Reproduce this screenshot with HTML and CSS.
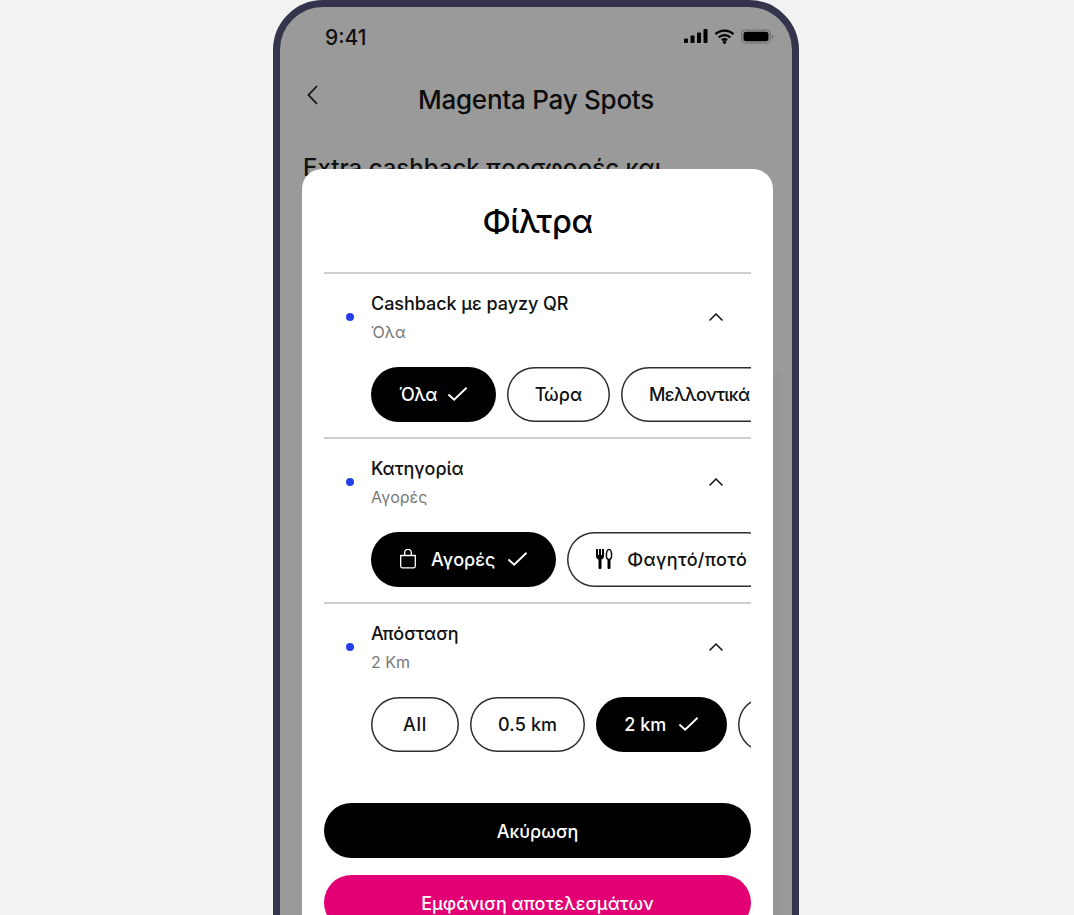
FILE: index.html
```html
<!DOCTYPE html>
<html lang="el">
<head>
<meta charset="utf-8">
<title>Magenta Pay Spots</title>
<link rel="stylesheet" href="styles.css">
</head>
<body>
<div class="phone">
  <div class="status">
    <span class="time">9:41</span>
    <div class="status-icons">
      <svg width="24" height="14" viewBox="0 0 24 14"><rect x="0" y="9.5" width="4" height="4.5" rx="1"/><rect x="6.5" y="6.500" width="4" height="7.5" rx="1"/><rect x="13" y="3.500" width="4" height="10.5" rx="1"/><rect x="19.5" y="0" width="4" height="14" rx="1"/></svg>
      <svg width="21" height="15" viewBox="0 0 21 15"><path class="wifi" d="M1.500 5.200C6.600.4 14.400.4 19.500 5.200M4.700 8.400c3.300-3 8.300-3 11.600 0M7.900 11.200c1.500-1.200 3.700-1.200 5.200 0"/><circle cx="10.500" cy="13.300" r="1.600"/></svg>
      <svg width="33" height="15" viewBox="0 0 33 15"><rect x=".7" y="1" width="28.600" height="13" rx="4" fill="none" stroke="#6f6f6f" stroke-width="1.200"/><rect x="2.500" y="2.800" width="25" height="9.400" rx="2.600"/><path d="M31 5.500c1 .3 1.500 1 1.500 2s-.5 1.700-1.500 2z" fill="#6f6f6f"/></svg>
    </div>
  </div>
  <div class="nav">
    <svg class="back" width="14" height="24" viewBox="0 0 14 24"><path d="M11 3 2.500 12 11 21"/></svg>
    <h1 class="nav-title">Magenta Pay Spots</h1>
  </div>
  <p class="lead">Extra cashback προσφορές και</p>
  <div class="shade"></div>

  <div class="sheet">
    <h2 class="sheet-title">Φίλτρα</h2>

    <section class="group">
      <div class="head">
        <span class="dot"></span>
        <div class="labels"><div class="label">Cashback με payzy QR</div><div class="value">Όλα</div></div>
        <svg class="chev" width="16" height="10" viewBox="0 0 16 10"><path d="M1.500 8.500 8 2l6.500 6.500"/></svg>
      </div>
      <div class="chips">
        <div class="chip on tight">Όλα<svg class="tick" width="21" height="16" viewBox="0 0 22 16"><path d="M1.500 8.500 7.500 14 20.500 1.500"/></svg></div>
        <div class="chip">Τώρα</div>
        <div class="chip tight">Μελλοντικά</div>
      </div>
    </section>

    <section class="group">
      <div class="head">
        <span class="dot"></span>
        <div class="labels"><div class="label">Κατηγορία</div><div class="value">Αγορές</div></div>
        <svg class="chev" width="16" height="10" viewBox="0 0 16 10"><path d="M1.500 8.500 8 2l6.500 6.500"/></svg>
      </div>
      <div class="chips">
        <div class="chip on"><svg class="lead-icon bag" width="18" height="20" viewBox="0 0 18 20"><path d="M1.700 6.500h14.600v10.800a1.500 1.500 0 0 1-1.500 1.500H3.200a1.500 1.500 0 0 1-1.500-1.500zM5.700 6.500V3.700a3.300 3.300 0 0 1 6.600 0v2.800"/></svg>Αγορές<svg class="tick" width="21" height="16" viewBox="0 0 22 16"><path d="M1.500 8.500 7.500 14 20.500 1.500"/></svg></div>
        <div class="chip loose"><svg class="lead-icon" width="18" height="22" viewBox="0 0 18 22"><path d="M1 1h2v6h1V1h2v6h1V1h2v7c0 2-1 3-2.500 3.500V20a1 1 0 0 1-1 1h-1a1 1 0 0 1-1-1v-8.500C2 11 1 10 1 8z"/><path class="knife" d="M14 1.500c-1.600 0-2.600 3-2.600 6 0 2.500.8 4 2.600 4s2.600-1.500 2.600-4c0-3-1-6-2.600-6z"/><rect x="12.500" y="11" width="3" height="10" rx="1"/></svg>Φαγητό/ποτό</div>
      </div>
    </section>

    <section class="group">
      <div class="head">
        <span class="dot"></span>
        <div class="labels"><div class="label">Απόσταση</div><div class="value">2 Km</div></div>
        <svg class="chev" width="16" height="10" viewBox="0 0 16 10"><path d="M1.500 8.500 8 2l6.500 6.500"/></svg>
      </div>
      <div class="chips">
        <div class="chip chip-all">All</div>
        <div class="chip mid">0.5 km</div>
        <div class="chip on">2 km<svg class="tick" width="21" height="16" viewBox="0 0 22 16"><path d="M1.500 8.500 7.500 14 20.500 1.500"/></svg></div>
        <div class="chip chip-blank"></div>
      </div>
    </section>

    <div class="actions">
      <div class="btn btn-dark">Ακύρωση</div>
      <div class="btn btn-pink">Εμφάνιση αποτελεσμάτων</div>
    </div>
  </div>
</div>
</body>
</html>
```
FILE: styles.css
```css
* { box-sizing: border-box; }
html, body { margin: 0; height: 915px; overflow: hidden; background: #f2f2f2; }
body { padding-right: 2px; font-family: "Inter", "Noto Sans", sans-serif; color: #000; }

.phone {
  position: relative;
  width: 526px;
  height: 1000px;
  margin: 0 auto;
  background: #9a9a9a;
  border: 7px solid #34354c;
  border-radius: 50px;
  overflow: hidden;
}
.status { display: flex; justify-content: space-between; align-items: center; height: 44px; padding: 16px 18px 0 45px; }
.time { font-size: 21px; font-weight: 500; color: #111; }
.status-icons { display: flex; align-items: center; gap: 6px; margin-top: -2px; }
.status-icons svg { display: block; fill: #000; }
.wifi { fill: none; stroke: #000; stroke-width: 2.400; }

.nav { position: relative; display: flex; justify-content: center; margin-top: 31px; height: 36px; }
.back { position: absolute; left: 26px; top: 1px; fill: none; stroke: #111; stroke-width: 1.800; }
.nav-title { margin: 0; font-size: 26px; font-weight: 500; line-height: 36px; letter-spacing: -.25px; color: #0c0c0c; }
.lead { margin: 35px 0 0 23px; font-size: 24px; font-weight: 500; line-height: 30px; color: #111; }
.shade { position: absolute; top: 365px; left: 493px; width: 8px; height: 640px; background: #969696; }

.sheet {
  position: absolute;
  top: 162px;
  left: 22px;
  width: 471px;
  height: 830px;
  padding: 0 22px;
  background: #fff;
  border-radius: 20px;
}
.sheet-title { margin: 0; height: 103px; padding-top: 30px; text-align: center; font-size: 32px; font-weight: 500; line-height: 46px; letter-spacing: -.4px; }

.group { height: 165px; border-top: 2px solid #cfcfcf; overflow: hidden; }
.head { display: flex; align-items: center; height: 60px; margin-top: 13px; padding: 0 27px 0 22px; }
.dot { width: 8px; height: 8px; border-radius: 50%; background: #2340e8; margin-right: 17px; flex: none; }
.labels { flex: 1; padding-top: 1px; }
.label { font-size: 18px; font-weight: 500; line-height: 28px; letter-spacing: -.05px; color: #111; }
.value { font-size: 16px; line-height: 28px; color: #777; }
.chev { fill: none; stroke: #111; stroke-width: 1.500; }

.chips { display: flex; gap: 11px; margin-top: 20px; padding-left: 47px; }
.chip {
  display: flex; align-items: center; justify-content: center; flex: none;
  height: 54.5px; padding: 0 28px;
  border-radius: 28px;
  box-shadow: inset 0 0 0 1.500px #2e2e2e;
  font-size: 18px; font-weight: 500; color: #111; background: #fff;
}
.chip.on { background: #000; box-shadow: none; color: #fff; }
.tight { letter-spacing: -.65px; }
.tight .tick { margin-left: 10px; }
.loose { letter-spacing: .35px; }
.mid { letter-spacing: .15px; }
.chip-all { min-width: 88px; letter-spacing: .8px; }
.chip-blank { width: 100px; }
.tick { margin-left: 12px; fill: none; stroke: currentColor; stroke-width: 2; }
.lead-icon { margin-right: 14px; }
.bag { fill: none; stroke: #fff; stroke-width: 1.300; }
.knife { fill: none; stroke: #111; stroke-width: 1.500; }

.actions { display: flex; flex-direction: column; gap: 17px; margin-top: 36px; }
.btn { display: flex; align-items: center; justify-content: center; height: 55px; padding-top: 1px; border-radius: 28px; color: #fff; font-size: 18px; font-weight: 500; }
.btn-dark { background: #000; }
.btn-pink { background: #e20074; }
```
